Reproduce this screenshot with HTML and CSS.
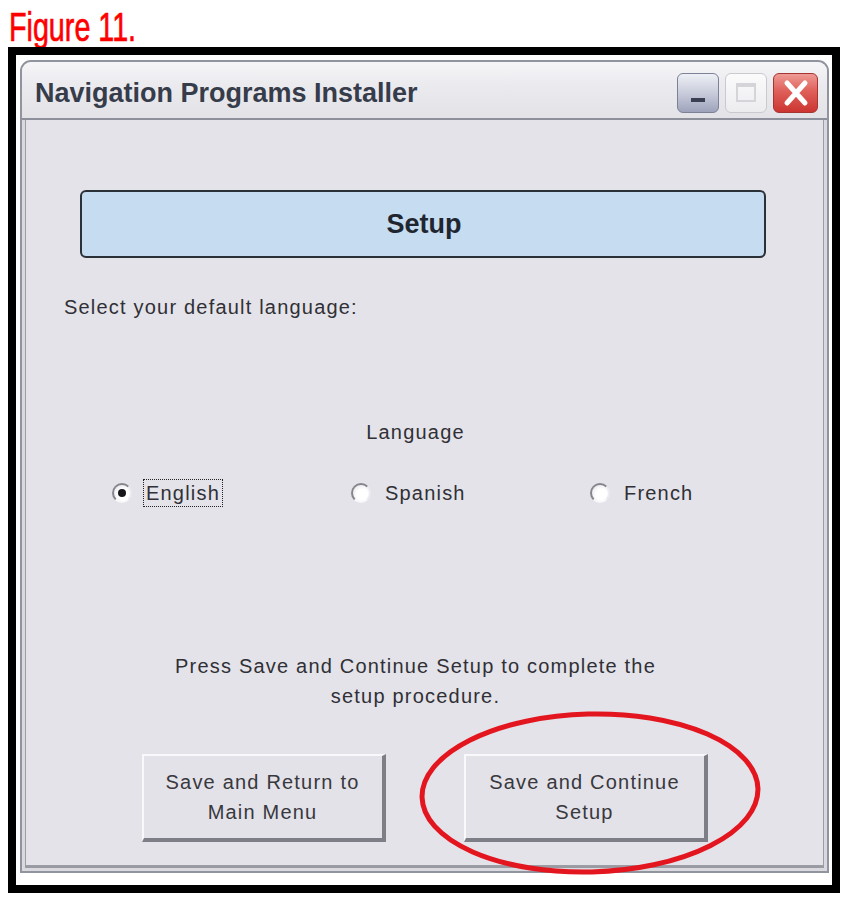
FILE: index.html
```html
<!DOCTYPE html>
<html lang="en">
<head>
  <meta charset="UTF-8" />
  <meta name="viewport" content="width=device-width, initial-scale=1.0">
  <title>Figure 11 - Navigation Programs Installer</title>
  <link rel="stylesheet" href="styles.css">
</head>
<body>
  <div class="caption"><span>Figure 11.</span></div>

  <div class="frame">
    <div class="window">
      <div class="title-bar">
        <div class="title">Navigation Programs Installer</div>
        <div class="title-buttons">
          <div class="tb-btn tb-min"><span></span></div>
          <div class="tb-btn tb-max"><span></span></div>
          <div class="tb-btn tb-close">
            <svg width="30" height="28" viewBox="0 0 30 28">
              <path d="M6 4 L24 24 M24 4 L6 24" stroke="#fff" stroke-width="5" stroke-linecap="round" fill="none" />
            </svg>
          </div>
        </div>
      </div>

      <div class="window-body">
        <div class="header-box">Setup</div>

        <p class="prompt">Select your default language:</p>

        <p class="group-label">Language</p>

        <div class="radio-row">
          <label class="radio">
            <span class="radio-dot checked"></span>
            <span class="radio-text focused">English</span>
          </label>
          <label class="radio">
            <span class="radio-dot"></span>
            <span class="radio-text">Spanish</span>
          </label>
          <label class="radio">
            <span class="radio-dot"></span>
            <span class="radio-text">French</span>
          </label>
        </div>

        <p class="note">Press Save and Continue Setup to complete the<br>setup procedure.</p>

        <div class="button-row">
          <button class="xp-button">Save and Return to<br>Main Menu</button>
          <button class="xp-button">Save and Continue<br>Setup</button>
        </div>
      </div>
    </div>

    <svg class="circle-mark" width="356" height="176" viewBox="0 0 356 176">
      <ellipse cx="176" cy="87" rx="168" ry="79" transform="rotate(-1.5 176 87)" fill="none" stroke="#e3161f" stroke-width="5" />
    </svg>
  </div>
</body>
</html>
```

FILE: styles.css
```css
body {
  margin: 0;
  background-color: #ffffff;
  font-family: "Liberation Sans", Arial, sans-serif;
}
.caption {
  height: 39px;
  padding: 8px 0 0 9px;
  line-height: 39px;
}
.caption span {
  display: inline-block;
  color: #ff0000;
  font-size: 41px;
  -webkit-text-stroke: 0.7px #ff0000;
  transform: scaleX(0.7);
  transform-origin: left center;
  white-space: nowrap;
}
.frame {
  position: relative;
  width: 832px;
  height: 846px;
  margin-left: 8px;
  box-sizing: border-box;
  border: 8px solid #000;
  padding: 5px 3px 12px 4px;
  background-color: #fff;
}
.window {
  height: 813px;
  box-sizing: border-box;
  border: 2px solid #8f949e;
  border-radius: 11px 11px 0 0;
  background-color: #d9d9df;
  display: flex;
  flex-direction: column;
}
.title-bar {
  height: 56px;
  flex-shrink: 0;
  display: flex;
  align-items: center;
  justify-content: space-between;
  padding: 0 9px 0 13px;
  border-radius: 9px 9px 0 0;
  background: linear-gradient(#f6f6f8, #ebebef 40%, #e2e2e7);
  border-bottom: 2px solid #8d909a;
}
.title {
  font-size: 27px;
  font-weight: bold;
  color: #363c4a;
  margin-top: 6px;
}
.title-buttons {
  display: flex;
  gap: 6px;
  margin-top: 5px;
}
.tb-btn {
  position: relative;
  width: 42px;
  height: 40px;
  box-sizing: border-box;
  border-radius: 6px;
}
.tb-min {
  border: 1px solid #7c8196;
  background: linear-gradient(#eef0f6, #c5c8d8 55%, #9ea3bb);
}
.tb-min span {
  position: absolute;
  left: 13px;
  bottom: 10px;
  width: 14px;
  height: 4px;
  background: #3a3f52;
}
.tb-max {
  border: 1px solid #c9c9ce;
  background: linear-gradient(#fbfbfc, #ececef);
}
.tb-max span {
  position: absolute;
  left: 10px;
  top: 9px;
  width: 20px;
  height: 19px;
  box-sizing: border-box;
  border: 2px solid #d4d4d9;
  border-top-width: 4px;
}
.tb-close {
  width: 45px;
  border: 1px solid #a63431;
  background: linear-gradient(#ee9a94, #df5f5a 45%, #cc3531);
  display: flex;
  align-items: center;
  justify-content: center;
}
.window-body {
  flex: 1;
  margin: 0 3px 5px;
  border: 1px solid #9d9da6;
  border-top: none;
  background-color: #e4e3e9;
  color: #303036;
  font-size: 20px;
  letter-spacing: 1.2px;
  padding: 70px 0 0 0;
  box-shadow: 0 2px 0 #9a9aa2;
}
.header-box {
  width: 686px;
  height: 68px;
  box-sizing: border-box;
  margin-left: 54px;
  border: 2px solid #2b3139;
  border-radius: 6px;
  background-color: #c5dcf1;
  display: flex;
  align-items: center;
  justify-content: center;
  font-size: 27px;
  font-weight: bold;
  letter-spacing: 0;
  color: #1f2630;
  padding-left: 2px;
}
.prompt {
  margin: 37px 0 0 38px;
  line-height: 24px;
}
.group-label {
  margin: 101px 0 0 0;
  line-height: 24px;
  text-align: center;
  padding-right: 18px;
}
.radio-row {
  display: grid;
  grid-template-columns: repeat(3, 239px);
  margin: 34px 0 0 86px;
  height: 30px;
}
.radio {
  display: flex;
  align-items: center;
  gap: 11px;
}
.radio-dot {
  position: relative;
  width: 20px;
  height: 20px;
  box-sizing: border-box;
  border-radius: 50%;
  border: 2px solid;
  border-color: #85858c #ececf0 #f8f8fa #85858c;
  background: radial-gradient(circle at 60% 60%, #ffffff 40%, #ededf1 75%);
}
.radio-dot.checked::after {
  content: "";
  position: absolute;
  left: 4px;
  top: 4px;
  width: 8px;
  height: 8px;
  border-radius: 50%;
  background: #15151a;
}
.radio-text {
  line-height: 26px;
  padding: 0 2px;
  border: 1px dotted transparent;
}
.radio-text.focused {
  border-color: #222;
}
.note {
  margin: 143px 0 0 0;
  line-height: 30px;
  text-align: center;
  padding-right: 18px;
}
.button-row {
  display: flex;
  justify-content: center;
  gap: 78px;
  margin-top: 43px;
}
.xp-button {
  width: 244px;
  height: 88px;
  box-sizing: border-box;
  font-family: inherit;
  font-size: 20px;
  letter-spacing: 1.2px;
  line-height: 30px;
  color: #38383e;
  background-color: #e3e2e8;
  border: 2px solid;
  border-color: #f9f9fb #7e7e86 #7e7e86 #f9f9fb;
  border-width: 2px 4px 4px 2px;
  padding: 0;
}
.circle-mark {
  position: absolute;
  left: 398px;
  top: 651px;
}
```
